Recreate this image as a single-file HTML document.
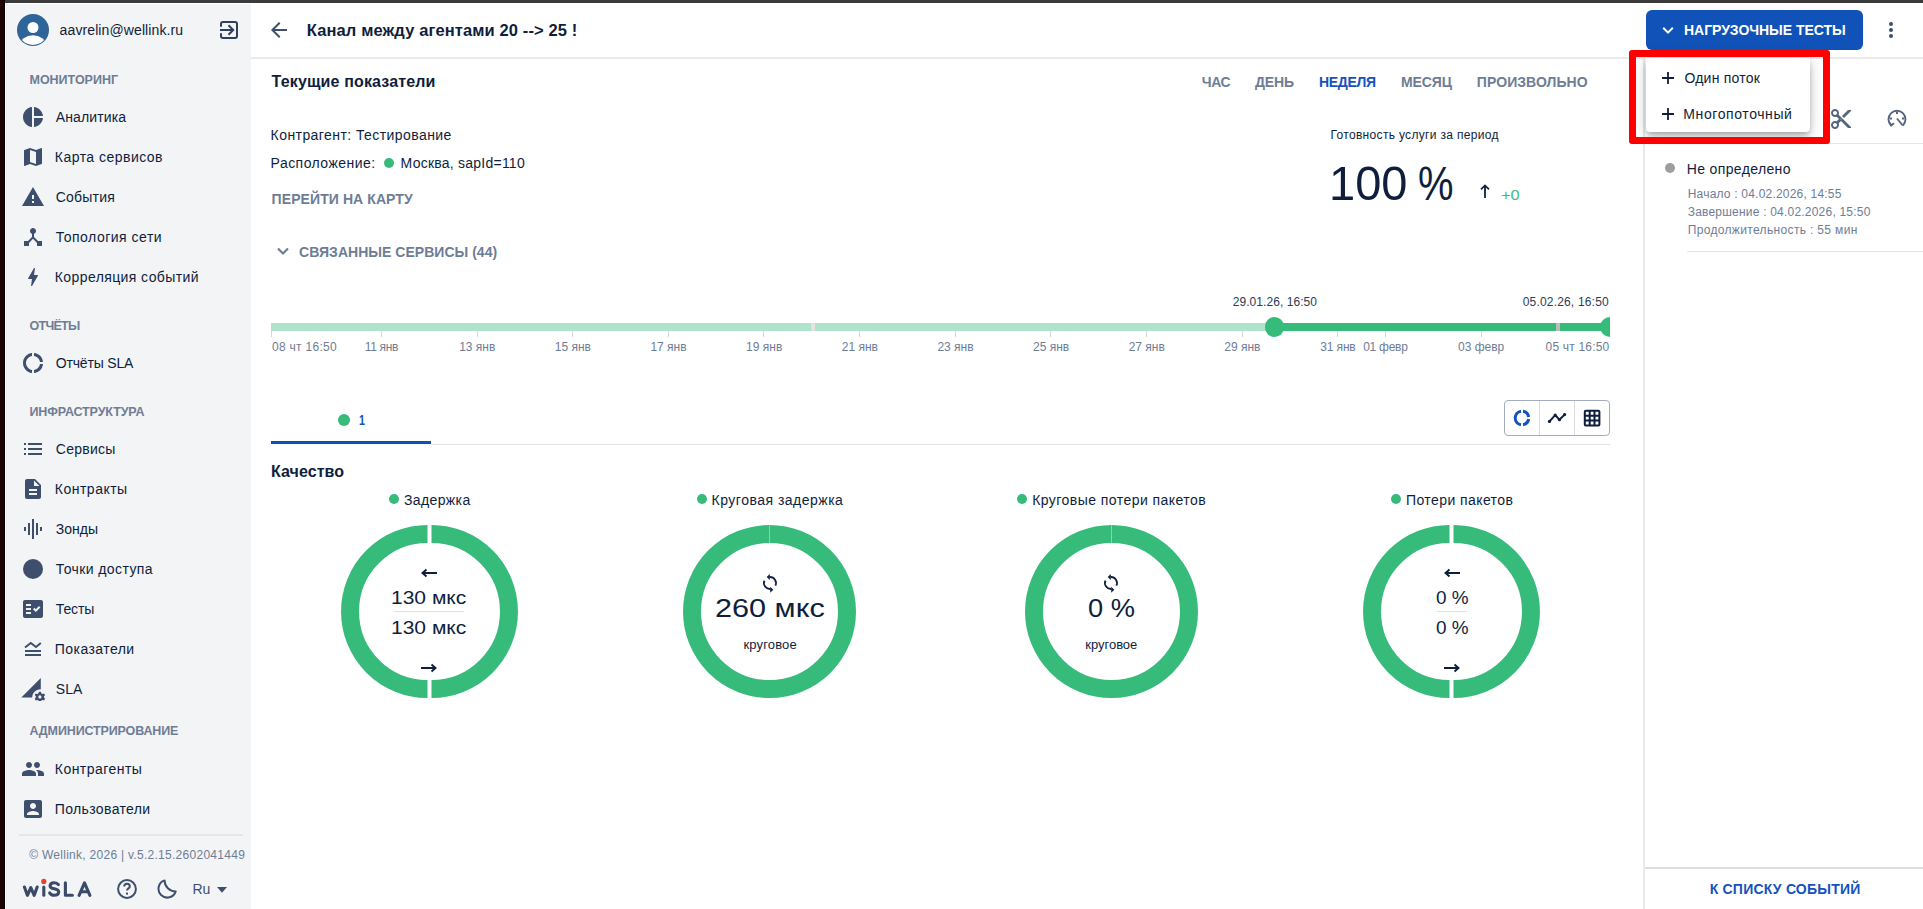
<!DOCTYPE html>
<html><head><meta charset="utf-8"><title>WiSLA</title>
<style>
html,body{margin:0;padding:0;}
body{width:1923px;height:909px;overflow:hidden;position:relative;font-family:"Liberation Sans", sans-serif;background:#fff;}
.t{position:absolute;white-space:nowrap;line-height:1;}
svg{display:block;}
</style></head><body>
<div style="position:absolute;left:0px;top:0px;width:1923px;height:909px;background:#ffffff;"></div><div style="position:absolute;left:6px;top:4px;width:245px;height:905px;background:#f3f4f6;"></div><div style="position:absolute;left:0px;top:0px;width:1923px;height:3px;background:#3b3b3b;"></div><div style="position:absolute;left:0px;top:0px;width:5px;height:909px;background:#1f0404;"></div><div style="position:absolute;left:4px;top:0px;width:1px;height:909px;background:#120000;"></div><svg style="position:absolute;left:17px;top:13.7px;" width="32" height="32" viewBox="0 0 32 32"><defs><clipPath id="avc"><circle cx="16" cy="16" r="15"/></clipPath></defs><circle cx="16" cy="16" r="16" fill="#2f6499"/><circle cx="16" cy="13.5" r="5.5" fill="#fcfdfe"/><ellipse cx="16" cy="31.3" rx="13" ry="10" fill="#fcfdfe" clip-path="url(#avc)"/></svg><svg style="position:absolute;left:220px;top:21px;" width="18" height="18" viewBox="0 0 18 18"><g fill="none" stroke="#2f3f5e" stroke-width="2"><path d="M1 5.7V3a2 2 0 0 1 2-2h12a2 2 0 0 1 2 2v12a2 2 0 0 1-2 2H3a2 2 0 0 1-2-2v-2.7"/><path d="M0 9h13"/><path d="M8.5 4.3L13.2 9l-4.7 4.7"/></g></svg><svg style="position:absolute;left:21.0px;top:105.0px;" width="24" height="24" viewBox="0 0 24 24"><path fill="#3e4f6e" d="M11 2v20c-5.07-.5-9-4.79-9-10s3.93-9.5 9-10zm2 0v9H22c-.47-4.74-4.27-8.53-9-9zm0 11v9c4.74-.47 8.53-4.26 9-9h-9z"/></svg><svg style="position:absolute;left:21.0px;top:145.0px;" width="24" height="24" viewBox="0 0 24 24"><path fill="#3e4f6e" d="M20.5 3l-.16.03L15 5.1 9 3 3.36 4.9c-.21.07-.36.25-.36.48V20.5c0 .28.22.5.5.5l.16-.03L9 18.9l6 2.1 5.64-1.9c.21-.07.36-.25.36-.48V3.5c0-.28-.22-.5-.5-.5zM15 19l-6-2.11V5l6 2.11V19z"/></svg><svg style="position:absolute;left:21.0px;top:185.0px;" width="24" height="24" viewBox="0 0 24 24"><path fill="#3e4f6e" d="M1 21h22L12 2 1 21zm12-3h-2v-2h2v2zm0-4h-2v-4h2v4z"/></svg><svg style="position:absolute;left:21.0px;top:225.0px;" width="24" height="24" viewBox="0 0 24 24"><path fill="#3e4f6e" d="M17 16l-4-4V8.82C14.16 8.4 15 7.3 15 6c0-1.66-1.34-3-3-3S9 4.34 9 6c0 1.3.84 2.4 2 2.82V12l-4 4H3v5h5v-3.05l4-4.2 4 4.2V21h5v-5h-4z"/></svg><svg style="position:absolute;left:21.0px;top:265.0px;" width="24" height="24" viewBox="0 0 24 24"><path fill="#3e4f6e" d="M11 21h-1l1-7H7.5c-.58 0-.57-.32-.38-.66.19-.34.05-.08.07-.12C8.48 10.94 10.42 7.54 13 3h1l-1 7h3.5c.49 0 .56.33.47.51l-.07.15C12.96 17.55 11 21 11 21z"/></svg><svg style="position:absolute;left:21.0px;top:351.0px;" width="24" height="24" viewBox="0 0 24 24"><path fill="#3e4f6e" d="M11 5.08V2c-5 .5-9 4.81-9 10s4 9.5 9 10v-3.08c-3-.48-6-3.4-6-6.92s3-6.44 6-6.92zM18.97 11H22c-.47-5-4-8.53-9-9v3.08C16 5.51 18.54 8 18.97 11zM13 18.92V22c5-.47 8.53-4 9-9h-3.03c-.43 3-2.97 5.49-5.97 5.92z"/></svg><svg style="position:absolute;left:21.0px;top:437.0px;" width="24" height="24" viewBox="0 0 24 24"><path fill="#3e4f6e" d="M3 13h2v-2H3v2zm0 5h2v-2H3v2zm0-10h2V6H3v2zm4 5h14v-2H7v2zm0 5h14v-2H7v2zM7 6v2h14V6H7z"/></svg><svg style="position:absolute;left:21.0px;top:477.0px;" width="24" height="24" viewBox="0 0 24 24"><path fill="#3e4f6e" d="M14 2H6c-1.1 0-1.99.9-1.99 2L4 20c0 1.1.89 2 1.99 2H18c1.1 0 2-.9 2-2V8l-6-6zm2 16H8v-2h8v2zm0-4H8v-2h8v2zm-3-5V3.5L18.5 9H13z"/></svg><svg style="position:absolute;left:21.0px;top:517.0px;" width="24" height="24" viewBox="0 0 24 24"><path fill="#3e4f6e" d="M7 18h2V6H7v12zm4 4h2V2h-2v20zm-8-8h2v-4H3v4zm12 4h2V6h-2v12zm4-8v4h2v-4h-2z"/></svg><svg style="position:absolute;left:21.0px;top:557.0px;" width="24" height="24" viewBox="0 0 24 24"><path fill="#3e4f6e" d="M12 2a10 10 0 1 0 0 20a10 10 0 1 0 0-20z"/></svg><svg style="position:absolute;left:21.0px;top:597.0px;" width="24" height="24" viewBox="0 0 24 24"><path fill="#3e4f6e" d="M20 3H4c-1.1 0-2 .9-2 2v14c0 1.1.9 2 2 2h16c1.1 0 2-.9 2-2V5c0-1.1-.9-2-2-2zM10 17H5v-2h5v2zm0-4H5v-2h5v2zm0-4H5V7h5v2zm4.82 6L12 12.16l1.41-1.41 1.41 1.42L17.99 9l1.42 1.42L14.82 15z"/></svg><svg style="position:absolute;left:21px;top:637.0px;" width="24" height="24" viewBox="0 0 24 24"><path fill="none" stroke="#3e4f6e" stroke-width="2" d="M4 10.5l5.8-4.5 5.2 4 4.8-4"/><rect x="4" y="13" width="16" height="2" fill="#3e4f6e"/><rect x="4" y="17" width="16" height="2" fill="#3e4f6e"/></svg><svg style="position:absolute;left:21px;top:677.0px;" width="24" height="24" viewBox="0 0 24 24"><path fill="#3e4f6e" d="M0.3 20.6L19.8 1v11.2c-5 0-8.6 3.6-8.6 8.4z"/><g transform="translate(18.9 19.9)"><path fill="#3e4f6e" d="M-1 -5.2h2l.4 1.5 1.3.7 1.5-.5 1 1.7-1.1 1.1v1.4l1.1 1.1-1 1.7-1.5-.5-1.3.7-.4 1.5h-2l-.4-1.5-1.3-.7-1.5.5-1-1.7 1.1-1.1v-1.4l-1.1-1.1 1-1.7 1.5.5 1.3-.7z"/><circle r="1.6" fill="#f3f4f6"/></g></svg><svg style="position:absolute;left:21.0px;top:757.0px;" width="24" height="24" viewBox="0 0 24 24"><path fill="#3e4f6e" d="M16 11c1.66 0 2.99-1.34 2.99-3S17.66 5 16 5c-1.66 0-3 1.34-3 3s1.34 3 3 3zm-8 0c1.66 0 2.99-1.34 2.99-3S9.66 5 8 5C6.34 5 5 6.34 5 8s1.34 3 3 3zm0 2c-2.33 0-7 1.17-7 3.5V19h14v-2.5c0-2.33-4.67-3.5-7-3.5zm8 0c-.29 0-.62.02-.97.05 1.16.84 1.97 1.97 1.97 3.45V19h6v-2.5c0-2.33-4.67-3.5-7-3.5z"/></svg><svg style="position:absolute;left:21.0px;top:797.0px;" width="24" height="24" viewBox="0 0 24 24"><path fill="#3e4f6e" d="M3 5v14c0 1.1.89 2 2 2h14c1.1 0 2-.9 2-2V5c0-1.1-.9-2-2-2H5c-1.11 0-2 .9-2 2zm12 4c0 1.66-1.34 3-3 3s-3-1.34-3-3 1.34-3 3-3 3 1.34 3 3zm-9 8c0-2 4-3.1 6-3.1s6 1.1 6 3.1v1H6v-1z"/></svg><div style="position:absolute;left:19px;top:834px;width:224px;height:2px;background:#e3e6eb;"></div><svg style="position:absolute;left:15px;top:872px;" width="85" height="32" viewBox="0 0 85 32"><g fill="none" stroke="#3a4b6a" stroke-width="3.1" stroke-linecap="round" stroke-linejoin="round"><path d="M9.4 15L12.4 23.3L15.8 15.6L19.2 23.3L22.2 15"/><path d="M28.8 15V23.3"/><path d="M43.4 12.6C42.4 11.2 40.9 10.7 39.2 10.7C36.8 10.7 35.1 12 35.1 13.9C35.1 17.9 43.7 15.7 43.7 19.8C43.7 21.9 41.8 23.2 39.2 23.2C37.1 23.2 35.5 22.4 34.7 20.9"/><path d="M50.4 10.8V23.3H57.4"/><path d="M64.1 23.3L69.5 10.9L74.9 23.3"/><path d="M66.1 19.7H72.9"/></g><circle cx="28.8" cy="9.4" r="2.6" fill="#e8412e"/></svg><svg style="position:absolute;left:117px;top:879px;" width="20" height="20" viewBox="0 0 20 20"><circle cx="10" cy="10" r="8.9" fill="none" stroke="#3e4f6e" stroke-width="2"/><path d="M7.2 7.6c0-1.6 1.2-2.8 2.8-2.8s2.8 1.1 2.8 2.6c0 1.9-2.8 2.1-2.8 4.2" fill="none" stroke="#3e4f6e" stroke-width="2"/><rect x="9" y="13.6" width="2" height="2" fill="#3e4f6e"/></svg><svg style="position:absolute;left:157px;top:879px;" width="20" height="20" viewBox="0 0 20 20"><path d="M7.6 1.4A8.8 8.8 0 1 0 18.7 12.4A11 11 0 0 1 7.6 1.4z" fill="none" stroke="#3e4f6e" stroke-width="2" stroke-linejoin="round"/></svg><svg style="position:absolute;left:217px;top:886.8px;" width="10" height="6" viewBox="0 0 10 6"><path d="M0 0h10L5 5.8z" fill="#3e4f6e"/></svg><div style="position:absolute;left:251px;top:57px;width:1672px;height:2px;background:#e8eaef;"></div><svg style="position:absolute;left:271px;top:22px;" width="16" height="16" viewBox="0 0 16 16"><path d="M16 7H3.83l5.59-5.59L8 0 0 8l8 8 1.41-1.41L3.83 9H16z" fill="#3e4f6e"/></svg><div style="position:absolute;left:384px;top:158.2px;width:10px;height:10px;border-radius:50%;background:#36bb7b"></div><svg style="position:absolute;left:277px;top:247px;" width="12" height="9" viewBox="0 0 12 9"><path d="M1 1.5l5 5 5-5" fill="none" stroke="#6e7d95" stroke-width="2.2"/></svg><svg style="position:absolute;left:1480px;top:184px;" width="10" height="14" viewBox="0 0 10 14"><path d="M5 14V2" fill="none" stroke="#253556" stroke-width="2"/><path d="M1 5.4L5 1.4 9 5.4" fill="none" stroke="#13213c" stroke-width="1.7"/></svg><div style="position:absolute;left:271px;top:323px;width:1004px;height:8px;background:#b0e3cb;"></div><div style="position:absolute;left:811px;top:323px;width:4px;height:8px;background:#e3e3e3;"></div><div style="position:absolute;left:1275px;top:323px;width:335px;height:8px;background:#36bb7b;"></div><div style="position:absolute;left:1556px;top:323px;width:4px;height:8px;background:#bdbdbd;"></div><div style="position:absolute;left:1264.9px;top:317.0px;width:19.6px;height:19.6px;border-radius:50%;background:#36bb7b"></div><div style="position:absolute;left:1600px;top:317px;width:10px;height:20px;overflow:hidden"><div style="width:20px;height:20px;border-radius:50%;background:#36bb7b"></div></div><div style="position:absolute;left:271px;top:331px;width:1px;height:6px;background:#d3d7de;"></div><div style="position:absolute;left:381px;top:331px;width:1px;height:6px;background:#d3d7de;"></div><div style="position:absolute;left:477px;top:331px;width:1px;height:6px;background:#d3d7de;"></div><div style="position:absolute;left:572px;top:331px;width:1px;height:6px;background:#d3d7de;"></div><div style="position:absolute;left:668px;top:331px;width:1px;height:6px;background:#d3d7de;"></div><div style="position:absolute;left:763px;top:331px;width:1px;height:6px;background:#d3d7de;"></div><div style="position:absolute;left:859px;top:331px;width:1px;height:6px;background:#d3d7de;"></div><div style="position:absolute;left:955px;top:331px;width:1px;height:6px;background:#d3d7de;"></div><div style="position:absolute;left:1050px;top:331px;width:1px;height:6px;background:#d3d7de;"></div><div style="position:absolute;left:1146px;top:331px;width:1px;height:6px;background:#d3d7de;"></div><div style="position:absolute;left:1242px;top:331px;width:1px;height:6px;background:#d3d7de;"></div><div style="position:absolute;left:1337px;top:331px;width:1px;height:6px;background:#d3d7de;"></div><div style="position:absolute;left:1385px;top:331px;width:1px;height:6px;background:#d3d7de;"></div><div style="position:absolute;left:1481px;top:331px;width:1px;height:6px;background:#d3d7de;"></div><div style="position:absolute;left:338px;top:414px;width:12px;height:12px;border-radius:50%;background:#36bb7b"></div><div style="position:absolute;left:271px;top:441px;width:160px;height:3px;background:#0e4fbf;"></div><div style="position:absolute;left:431px;top:444px;width:1179px;height:1px;background:#e0e3e8;"></div><div style="position:absolute;left:1504px;top:400px;width:104px;height:34px;border:1px solid #a3adbd;border-radius:4px;"></div><div style="position:absolute;left:1539px;top:401px;width:1px;height:34px;background:#d5d9e0;"></div><div style="position:absolute;left:1574px;top:401px;width:1px;height:34px;background:#d5d9e0;"></div><svg style="position:absolute;left:1512px;top:408px;" width="20" height="20" viewBox="0 0 20 20"><g fill="none" stroke="#1452c0" stroke-width="3"><path d="M9 16.68A6.75 6.75 0 0 1 9 3.32"/><path d="M11 3.32A6.75 6.75 0 0 1 16.68 9"/><path d="M16.68 11A6.75 6.75 0 0 1 11 16.68"/></g></svg><svg style="position:absolute;left:1547px;top:412px;" width="20" height="12" viewBox="0 0 20 12"><g fill="none" stroke="#0e1e3c" stroke-width="2" stroke-linejoin="round"><path d="M2.5 9.4L8.2 3.1 12.4 7.7 17.6 2.6"/></g><g fill="#0e1e3c"><circle cx="2.5" cy="9.4" r="1.6"/><circle cx="8.2" cy="3.1" r="1.6"/><circle cx="12.4" cy="7.7" r="1.6"/><circle cx="17.6" cy="2.6" r="1.6"/></g></svg><svg style="position:absolute;left:1583px;top:409px;" width="18" height="18" viewBox="0 0 18 18"><g fill="none" stroke="#0e1e3c" stroke-width="2"><rect x="1.8" y="1.8" width="14.6" height="14.6" rx="1"/><path d="M6.7 1.8v14.6M11.5 1.8v14.6M1.8 6.7h14.6M1.8 11.5h14.6"/></g></svg><div style="position:absolute;left:389px;top:494.3px;width:10px;height:10px;border-radius:50%;background:#36bb7b"></div><div style="position:absolute;left:697px;top:494.3px;width:10px;height:10px;border-radius:50%;background:#36bb7b"></div><div style="position:absolute;left:1017px;top:494.3px;width:10px;height:10px;border-radius:50%;background:#36bb7b"></div><div style="position:absolute;left:1391px;top:494.3px;width:10px;height:10px;border-radius:50%;background:#36bb7b"></div><svg style="position:absolute;left:338.5px;top:524.85px;" width="181.0" height="173.0" viewBox="0 0 181.0 173.0"><path d="M88.5 9.0 A77.5 77.5 0 0 0 88.5 164.0" fill="none" stroke="#36bb7b" stroke-width="18"/><path d="M92.5 9.0 A77.5 77.5 0 0 1 92.5 164.0" fill="none" stroke="#36bb7b" stroke-width="18"/></svg><svg style="position:absolute;left:419.5px;top:568.4px;" width="18" height="10" viewBox="0 0 18 10"><path d="M17 5H3M6.5 1.5L2.5 5l4 3.5" fill="none" stroke="#0e1e3c" stroke-width="1.9"/></svg><div style="position:absolute;left:393.8px;top:611px;width:70px;height:1px;background:#dde0e6;"></div><svg style="position:absolute;left:420.4px;top:663.4px;" width="18" height="10" viewBox="0 0 18 10"><path d="M1 5h14M11.5 1.5l4 3.5-4 3.5" fill="none" stroke="#0e1e3c" stroke-width="1.9"/></svg><svg style="position:absolute;left:683.35px;top:524.85px;" width="173.0" height="173.0" viewBox="0 0 173.0 173.0"><circle cx="86.5" cy="86.5" r="77.5" fill="none" stroke="#36bb7b" stroke-width="18"/><rect x="86.0" y="0" width="1" height="18" fill="#b8b8b8"/></svg><svg style="position:absolute;left:762px;top:573px;" width="16" height="20" viewBox="0 0 16 20"><g fill="none" stroke="#0e1e3c" stroke-width="1.8"><path d="M7.6 4A6 6 0 0 1 13.4 12.6"/><path d="M8.4 16A6 6 0 0 1 2.4 7.7"/></g><path fill="#0e1e3c" d="M7.8 1v6L4.7 4z M8.2 13.8v6l3.1-3z"/></svg><svg style="position:absolute;left:1024.5px;top:524.85px;" width="173.0" height="173.0" viewBox="0 0 173.0 173.0"><circle cx="86.5" cy="86.5" r="77.5" fill="none" stroke="#36bb7b" stroke-width="18"/><rect x="86.0" y="0" width="1" height="18" fill="#b8b8b8"/></svg><svg style="position:absolute;left:1103.1px;top:572.8px;" width="16" height="20" viewBox="0 0 16 20"><g fill="none" stroke="#0e1e3c" stroke-width="1.8"><path d="M7.6 4A6 6 0 0 1 13.4 12.6"/><path d="M8.4 16A6 6 0 0 1 2.4 7.7"/></g><path fill="#0e1e3c" d="M7.8 1v6L4.7 4z M8.2 13.8v6l3.1-3z"/></svg><svg style="position:absolute;left:1361.25px;top:524.85px;" width="181.0" height="173.0" viewBox="0 0 181.0 173.0"><path d="M88.5 9.0 A77.5 77.5 0 0 0 88.5 164.0" fill="none" stroke="#36bb7b" stroke-width="18"/><path d="M92.5 9.0 A77.5 77.5 0 0 1 92.5 164.0" fill="none" stroke="#36bb7b" stroke-width="18"/></svg><svg style="position:absolute;left:1442.9px;top:568.1px;" width="18" height="10" viewBox="0 0 18 10"><path d="M17 5H3M6.5 1.5L2.5 5l4 3.5" fill="none" stroke="#0e1e3c" stroke-width="1.9"/></svg><div style="position:absolute;left:1437px;top:611px;width:29.6px;height:1px;background:#dde0e6;"></div><svg style="position:absolute;left:1443px;top:663.2px;" width="18" height="10" viewBox="0 0 18 10"><path d="M1 5h14M11.5 1.5l4 3.5-4 3.5" fill="none" stroke="#0e1e3c" stroke-width="1.9"/></svg><div style="position:absolute;left:1643px;top:59px;width:2px;height:850px;background:#e8eaef;"></div><div style="position:absolute;left:1645px;top:143px;width:278px;height:1px;background:#e3e6eb;"></div><div style="position:absolute;left:1646px;top:10px;width:217px;height:40px;border-radius:6px;background:#1052b8"></div><svg style="position:absolute;left:1662px;top:26px;" width="12" height="9" viewBox="0 0 12 9"><path d="M1.2 1.8l4.8 4.8 4.8-4.8" fill="none" stroke="#ffffff" stroke-width="2"/></svg><div style="position:absolute;left:1889px;top:21.5px;width:4px;height:4px;border-radius:50%;background:#3e4f6e"></div><div style="position:absolute;left:1889px;top:28.2px;width:4px;height:4px;border-radius:50%;background:#3e4f6e"></div><div style="position:absolute;left:1889px;top:34.2px;width:4px;height:4px;border-radius:50%;background:#3e4f6e"></div><svg style="position:absolute;left:1829.0px;top:106.9px;" width="24" height="24" viewBox="0 0 24 24"><path fill="#56657e" d="M9.64 7.64c.23-.5.36-1.05.36-1.64 0-2.21-1.79-4-4-4S2 3.79 2 6s1.79 4 4 4c.59 0 1.14-.13 1.64-.36L10 12l-2.36 2.36C7.14 14.13 6.59 14 6 14c-2.21 0-4 1.79-4 4s1.79 4 4 4 4-1.79 4-4c0-.59-.13-1.14-.36-1.64L12 14l7 7h3v-1L9.64 7.64zM6 8c-1.1 0-2-.89-2-2s.9-2 2-2 2 .89 2 2-.9 2-2 2zm0 12c-1.1 0-2-.89-2-2s.9-2 2-2 2 .89 2 2-.9 2-2 2zm6-7.5c-.28 0-.5-.22-.5-.5s.22-.5.5-.5.5.22.5.5-.22.5-.5.5zM19 3l-6 6 2 2 7-7V3h-3z"/></svg><svg style="position:absolute;left:1887px;top:108.5px;" width="20" height="20" viewBox="0 0 20 20"><g fill="none" stroke="#56657e" stroke-width="1.9"><path d="M4.2 16.5A8.5 8.5 0 1 1 15.8 16.5"/><path d="M10 9.5l5.8 7"/><path d="M2.6 13.6l1.6 2.9 2.8-2.4"/></g><g fill="#56657e"><rect x="9" y="3" width="2" height="2"/><rect x="3" y="8.5" width="2" height="2"/><rect x="15" y="8.5" width="2" height="2"/></g></svg><div style="position:absolute;left:1665px;top:163.2px;width:10px;height:10px;border-radius:50%;background:#9e9e9e"></div><div style="position:absolute;left:1687px;top:250.5px;width:236px;height:1px;background:#e0e3e8;"></div><div style="position:absolute;left:1645px;top:867px;width:278px;height:2px;background:#dedede;"></div><div style="position:absolute;left:1646px;top:58px;width:164px;height:73.5px;background:#fff;border-radius:0 0 4px 4px;box-shadow:0 3px 5px -1px rgba(0,0,0,.2),0 6px 10px 0 rgba(0,0,0,.14),0 1px 18px 0 rgba(0,0,0,.12)"></div><svg style="position:absolute;left:1662px;top:72.3px;" width="12" height="12" viewBox="0 0 12 12"><path d="M6 0v12M0 6h12" stroke="#0e1e3c" stroke-width="1.8"/></svg><svg style="position:absolute;left:1662px;top:108px;" width="12" height="12" viewBox="0 0 12 12"><path d="M6 0v12M0 6h12" stroke="#0e1e3c" stroke-width="1.8"/></svg><div style="position:absolute;left:1629px;top:50px;width:187px;height:80px;border:7px solid #ff0000;border-radius:3px"></div>
<div class="t" style="left:59.60px;top:22.95px;font-size:14px;font-weight:400;color:#0e1e3c;letter-spacing:0.105px;">aavrelin@wellink.ru</div><div class="t" style="left:29.50px;top:73.52px;font-size:12.5px;font-weight:700;color:#6e7d95;letter-spacing:-0.016px;">МОНИТОРИНГ</div><div class="t" style="left:29.50px;top:319.82px;font-size:12.5px;font-weight:700;color:#6e7d95;letter-spacing:-0.728px;">ОТЧЁТЫ</div><div class="t" style="left:29.50px;top:405.62px;font-size:12.5px;font-weight:700;color:#6e7d95;letter-spacing:-0.125px;">ИНФРАСТРУКТУРА</div><div class="t" style="left:29.50px;top:725.42px;font-size:12.5px;font-weight:700;color:#6e7d95;letter-spacing:-0.139px;">АДМИНИСТРИРОВАНИЕ</div><div class="t" style="left:55.80px;top:110.35px;font-size:14px;font-weight:400;color:#0e1e3c;letter-spacing:0.124px;">Аналитика</div><div class="t" style="left:54.80px;top:150.35px;font-size:14px;font-weight:400;color:#0e1e3c;letter-spacing:0.475px;">Карта сервисов</div><div class="t" style="left:55.80px;top:190.35px;font-size:14px;font-weight:400;color:#0e1e3c;letter-spacing:0.198px;">События</div><div class="t" style="left:55.80px;top:230.35px;font-size:14px;font-weight:400;color:#0e1e3c;letter-spacing:0.496px;">Топология сети</div><div class="t" style="left:54.80px;top:270.35px;font-size:14px;font-weight:400;color:#0e1e3c;letter-spacing:0.403px;">Корреляция событий</div><div class="t" style="left:55.80px;top:356.35px;font-size:14px;font-weight:400;color:#0e1e3c;letter-spacing:-0.186px;">Отчёты SLA</div><div class="t" style="left:55.80px;top:442.35px;font-size:14px;font-weight:400;color:#0e1e3c;letter-spacing:0.243px;">Сервисы</div><div class="t" style="left:54.80px;top:482.35px;font-size:14px;font-weight:400;color:#0e1e3c;letter-spacing:0.494px;">Контракты</div><div class="t" style="left:55.80px;top:522.35px;font-size:14px;font-weight:400;color:#0e1e3c;letter-spacing:0.014px;">Зонды</div><div class="t" style="left:55.80px;top:562.35px;font-size:14px;font-weight:400;color:#0e1e3c;letter-spacing:0.402px;">Точки доступа</div><div class="t" style="left:55.80px;top:602.35px;font-size:14px;font-weight:400;color:#0e1e3c;letter-spacing:-0.141px;">Тесты</div><div class="t" style="left:54.80px;top:642.35px;font-size:14px;font-weight:400;color:#0e1e3c;letter-spacing:0.439px;">Показатели</div><div class="t" style="left:55.80px;top:682.35px;font-size:14px;font-weight:400;color:#0e1e3c;letter-spacing:0.000px;">SLA</div><div class="t" style="left:54.80px;top:762.35px;font-size:14px;font-weight:400;color:#0e1e3c;letter-spacing:0.461px;">Контрагенты</div><div class="t" style="left:54.80px;top:802.35px;font-size:14px;font-weight:400;color:#0e1e3c;letter-spacing:0.359px;">Пользователи</div><div class="t" style="left:29.20px;top:848.94px;font-size:12px;font-weight:400;color:#6e7d95;letter-spacing:0.278px;">© Wellink, 2026 | v.5.2.15.2602041449</div><div class="t" style="left:192.60px;top:882.05px;font-size:14px;font-weight:400;color:#3e4f6e;letter-spacing:-0.110px;">Ru</div><div class="t" style="left:306.80px;top:21.93px;font-size:16.5px;font-weight:700;color:#0e1e3c;letter-spacing:0.115px;">Канал между агентами 20 --&gt; 25 !</div><div class="t" style="left:271.60px;top:74.46px;font-size:16px;font-weight:700;color:#0e1e3c;letter-spacing:0.145px;">Текущие показатели</div><div class="t" style="left:1201.70px;top:75.15px;font-size:14px;font-weight:700;color:#6e7d95;letter-spacing:-0.399px;">ЧАС</div><div class="t" style="left:1255.00px;top:75.15px;font-size:14px;font-weight:700;color:#6e7d95;letter-spacing:-0.141px;">ДЕНЬ</div><div class="t" style="left:1319.00px;top:75.15px;font-size:14px;font-weight:700;color:#1452c0;letter-spacing:-0.317px;">НЕДЕЛЯ</div><div class="t" style="left:1401.00px;top:75.15px;font-size:14px;font-weight:700;color:#6e7d95;letter-spacing:-0.118px;">МЕСЯЦ</div><div class="t" style="left:1476.80px;top:75.15px;font-size:14px;font-weight:700;color:#6e7d95;letter-spacing:0.076px;">ПРОИЗВОЛЬНО</div><div class="t" style="left:270.60px;top:127.55px;font-size:14px;font-weight:400;color:#0e1e3c;letter-spacing:0.429px;">Контрагент: Тестирование</div><div class="t" style="left:270.60px;top:155.75px;font-size:14px;font-weight:400;color:#0e1e3c;letter-spacing:0.453px;">Расположение:</div><div class="t" style="left:400.60px;top:155.75px;font-size:14px;font-weight:400;color:#0e1e3c;letter-spacing:0.235px;">Москва, sapId=110</div><div class="t" style="left:271.60px;top:192.15px;font-size:14px;font-weight:700;color:#6e7d95;letter-spacing:0.086px;">ПЕРЕЙТИ НА КАРТУ</div><div class="t" style="left:299.10px;top:245.15px;font-size:14px;font-weight:700;color:#6e7d95;letter-spacing:0.025px;">СВЯЗАННЫЕ СЕРВИСЫ (44)</div><div class="t" style="left:1330.50px;top:128.74px;font-size:12px;font-weight:400;color:#0e1e3c;letter-spacing:0.321px;">Готовность услуги за период</div><div class="t" style="left:1328.52px;top:159.12px;font-size:49px;font-weight:400;color:#0e1e3c;letter-spacing:0.000px;transform:scaleX(0.9600);transform-origin:0 0;">100</div><div class="t" style="left:1417.59px;top:159.12px;font-size:49px;font-weight:400;color:#0e1e3c;letter-spacing:0.000px;transform:scaleX(0.8146);transform-origin:0 0;">%</div><div class="t" style="left:1500.80px;top:187.65px;font-size:14px;font-weight:400;color:#3dbd7d;letter-spacing:0.000px;transform:scaleX(1.1746);transform-origin:0 0;">+0</div><div class="t" style="left:1232.75px;top:295.64px;font-size:12px;font-weight:400;color:#2d3b57;letter-spacing:0.055px;">29.01.26, 16:50</div><div class="t" style="left:1522.70px;top:295.64px;font-size:12px;font-weight:400;color:#2d3b57;letter-spacing:0.183px;">05.02.26, 16:50</div><div class="t" style="left:364.77px;top:340.84px;font-size:12px;font-weight:400;color:#6e7d95;letter-spacing:-0.323px;">11 янв</div><div class="t" style="left:459.16px;top:340.84px;font-size:12px;font-weight:400;color:#6e7d95;letter-spacing:0.000px;">13 янв</div><div class="t" style="left:554.81px;top:340.84px;font-size:12px;font-weight:400;color:#6e7d95;letter-spacing:0.000px;">15 янв</div><div class="t" style="left:650.45px;top:340.84px;font-size:12px;font-weight:400;color:#6e7d95;letter-spacing:0.000px;">17 янв</div><div class="t" style="left:746.09px;top:340.84px;font-size:12px;font-weight:400;color:#6e7d95;letter-spacing:0.000px;">19 янв</div><div class="t" style="left:841.73px;top:340.84px;font-size:12px;font-weight:400;color:#6e7d95;letter-spacing:0.000px;">21 янв</div><div class="t" style="left:937.38px;top:340.84px;font-size:12px;font-weight:400;color:#6e7d95;letter-spacing:0.000px;">23 янв</div><div class="t" style="left:1033.02px;top:340.84px;font-size:12px;font-weight:400;color:#6e7d95;letter-spacing:0.000px;">25 янв</div><div class="t" style="left:1128.66px;top:340.84px;font-size:12px;font-weight:400;color:#6e7d95;letter-spacing:0.000px;">27 янв</div><div class="t" style="left:1224.31px;top:340.84px;font-size:12px;font-weight:400;color:#6e7d95;letter-spacing:0.000px;">29 янв</div><div class="t" style="left:1320.35px;top:340.84px;font-size:12px;font-weight:400;color:#6e7d95;letter-spacing:-0.161px;">31 янв</div><div class="t" style="left:1363.17px;top:340.84px;font-size:12px;font-weight:400;color:#6e7d95;letter-spacing:-0.267px;">01 февр</div><div class="t" style="left:1458.01px;top:340.84px;font-size:12px;font-weight:400;color:#6e7d95;letter-spacing:0.000px;">03 февр</div><div class="t" style="left:272.00px;top:340.84px;font-size:12px;font-weight:400;color:#6e7d95;letter-spacing:0.288px;">08 чт 16:50</div><div class="t" style="left:1545.60px;top:340.84px;font-size:12px;font-weight:400;color:#6e7d95;letter-spacing:0.188px;">05 чт 16:50</div><div class="t" style="left:358.80px;top:413.15px;font-size:14px;font-weight:700;color:#1452c0;letter-spacing:0.000px;transform:scaleX(0.7625);transform-origin:0 0;">1</div><div class="t" style="left:270.90px;top:464.26px;font-size:16px;font-weight:700;color:#0e1e3c;letter-spacing:0.086px;">Качество</div><div class="t" style="left:404.00px;top:493.15px;font-size:14px;font-weight:400;color:#0e1e3c;letter-spacing:0.374px;">Задержка</div><div class="t" style="left:711.60px;top:493.15px;font-size:14px;font-weight:400;color:#0e1e3c;letter-spacing:0.491px;">Круговая задержка</div><div class="t" style="left:1032.20px;top:493.15px;font-size:14px;font-weight:400;color:#0e1e3c;letter-spacing:0.448px;">Круговые потери пакетов</div><div class="t" style="left:1406.00px;top:493.15px;font-size:14px;font-weight:400;color:#0e1e3c;letter-spacing:0.416px;">Потери пакетов</div><div class="t" style="left:391.13px;top:588.86px;font-size:18px;font-weight:400;color:#0e1e3c;letter-spacing:0.000px;transform:scaleX(1.1672);transform-origin:0 0;">130 мкс</div><div class="t" style="left:391.13px;top:618.56px;font-size:18px;font-weight:400;color:#0e1e3c;letter-spacing:0.000px;transform:scaleX(1.1672);transform-origin:0 0;">130 мкс</div><div class="t" style="left:714.80px;top:596.41px;font-size:25.5px;font-weight:400;color:#0e1e3c;letter-spacing:0.000px;transform:scaleX(1.2008);transform-origin:0 0;">260 мкс</div><div class="t" style="left:743.55px;top:637.70px;font-size:13px;font-weight:400;color:#0e1e3c;letter-spacing:0.136px;">круговое</div><div class="t" style="left:1087.63px;top:596.41px;font-size:25.5px;font-weight:400;color:#0e1e3c;letter-spacing:0.000px;transform:scaleX(1.0670);transform-origin:0 0;">0 %</div><div class="t" style="left:1085.35px;top:637.80px;font-size:13px;font-weight:400;color:#0e1e3c;letter-spacing:-0.035px;">круговое</div><div class="t" style="left:1436.00px;top:588.86px;font-size:18px;font-weight:400;color:#0e1e3c;letter-spacing:0.000px;transform:scaleX(1.0512);transform-origin:0 0;">0 %</div><div class="t" style="left:1436.00px;top:618.56px;font-size:18px;font-weight:400;color:#0e1e3c;letter-spacing:0.000px;transform:scaleX(1.0512);transform-origin:0 0;">0 %</div><div class="t" style="left:1684.00px;top:23.45px;font-size:14px;font-weight:700;color:#ffffff;letter-spacing:-0.036px;">НАГРУЗОЧНЫЕ ТЕСТЫ</div><div class="t" style="left:1686.70px;top:162.35px;font-size:14px;font-weight:400;color:#0e1e3c;letter-spacing:0.367px;">Не определено</div><div class="t" style="left:1687.70px;top:187.94px;font-size:12px;font-weight:400;color:#6e7d95;letter-spacing:0.204px;">Начало : 04.02.2026, 14:55</div><div class="t" style="left:1687.70px;top:205.54px;font-size:12px;font-weight:400;color:#6e7d95;letter-spacing:0.210px;">Завершение : 04.02.2026, 15:50</div><div class="t" style="left:1687.70px;top:223.54px;font-size:12px;font-weight:400;color:#6e7d95;letter-spacing:0.343px;">Продолжительность : 55 мин</div><div class="t" style="left:1709.70px;top:882.45px;font-size:14px;font-weight:700;color:#1452c0;letter-spacing:0.213px;">К СПИСКУ СОБЫТИЙ</div><div class="t" style="left:1684.40px;top:71.15px;font-size:14px;font-weight:400;color:#0e1e3c;letter-spacing:0.234px;">Один поток</div><div class="t" style="left:1683.30px;top:107.15px;font-size:14px;font-weight:400;color:#0e1e3c;letter-spacing:0.596px;">Многопоточный</div>
</body></html>
